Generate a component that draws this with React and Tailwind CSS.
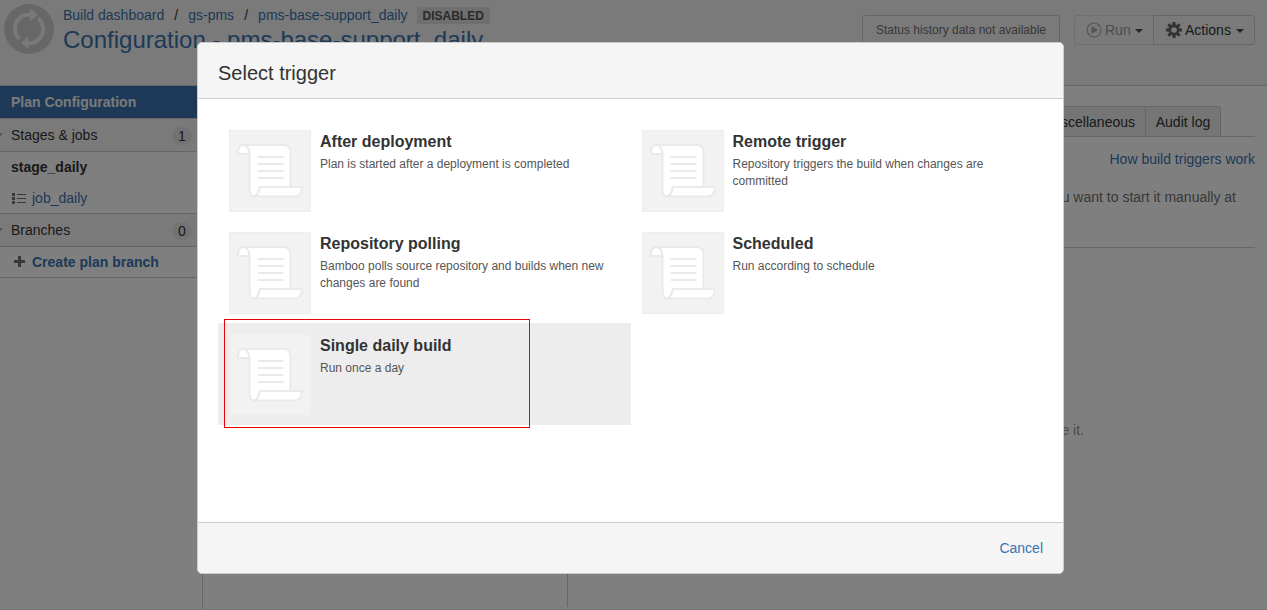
function ScriptIcon() {
  return (
    <svg viewBox="0 0 80 80" className="block size-20" fill="#fff" stroke="#e9ebea" strokeWidth="2" strokeLinejoin="round">
      <path d="M13 14H54Q60.500 14 60.500 22V56H30C28.500 61 27.500 65.500 24 65.500C20.500 65.500 19.500 61 19.500 57V23H8C8 17.500 9.500 14 13 14Z" />
      <path d="M8 23H19.500C19 18 17.500 14 13 14C9.500 14 8 17.500 8 23Z" />
      <path d="M30 56H72C71.500 61 69.500 65.500 65.500 65.500H24C27.500 65.500 29 61 30 56Z" />
      <path d="M27.500 26H53.500M27.500 33H53.500M27.500 40H53.500M27.500 47H53.500" />
    </svg>
  );
}

function PlanAvatar() {
  return (
    <svg viewBox="0 0 50 50" className="size-[50px] shrink-0">
      <circle cx="25" cy="25" r="25" fill="#cfcfcf" />
      <g fill="none" stroke="#f3f3f3" strokeWidth="4">
        <path d="M15.500 35.500A14.200 14.200 0 0 1 26.500 10.800" />
        <path d="M34.500 14.500A14.200 14.200 0 0 1 23.500 39.200" />
      </g>
      <path d="M26 4.500L33.500 11L26 17.500Z" fill="#f3f3f3" />
      <path d="M24.500 45L17 39L24.500 32.500Z" fill="#f3f3f3" />
    </svg>
  );
}

function Gear() {
  return (
    <svg viewBox="0 0 16 16" className="size-4 shrink-0">
      <g stroke="#666" strokeWidth="3">
        <path d="M8 0V16M0 8H16M2.300 2.300L13.700 13.700M13.700 2.300L2.300 13.700" />
      </g>
      <circle cx="8" cy="8" r="5.700" fill="#666" />
      <circle cx="8" cy="8" r="2.800" fill="#f5f5f5" />
    </svg>
  );
}

function Caret() {
  return (
    <svg viewBox="0 0 8 4" className="mt-px h-1 w-2 shrink-0">
      <path d="M0 0H8L4 4Z" fill="#4a4a4a" />
    </svg>
  );
}

function SidebarSection({ label, count }) {
  return (
    <div className="flex h-[33px] items-center border-b border-[#ccc] bg-[#f5f5f5] pr-[10px]">
      <svg viewBox="0 0 3 4" className="h-1 w-[3px]">
        <path d="M0 0H3L0 3.500Z" fill="#aaa" />
      </svg>
      <span className="ml-2 flex-1">{label}</span>
      <span className="mt-[2px] h-[18px] w-5 rounded-full bg-[#e6e6e6] text-center leading-[18px]">{count}</span>
    </div>
  );
}

const triggers = [
  { title: "After deployment", text: "Plan is started after a deployment is completed" },
  { title: "Remote trigger", text: "Repository triggers the build when changes are committed" },
  { title: "Repository polling", text: "Bamboo polls source repository and builds when new changes are found" },
  { title: "Scheduled", text: "Run according to schedule" },
  { title: "Single daily build", text: "Run once a day", active: true },
];

function Trigger({ title, text, active }) {
  return (
    <li className={active ? "flex h-[102px] bg-[#ededed] pt-[11px] pl-[11px]" : "flex h-[102px] pt-[11px] pl-[11px]"}>
      <div className="size-[82px] shrink-0 border border-[#ededed] bg-[#f2f2f2]">
        <ScriptIcon />
      </div>
      <div className="ml-[9px] w-[290px]">
        <h3 className="text-[16px] leading-[23px] font-bold text-[#333]">{title}</h3>
        <p className="mt-[3px] text-[12px] leading-[17px] text-[#555]">{text}</p>
      </div>
    </li>
  );
}

function Page() {
  return (
    <div className="flex h-[610px] flex-col">
      <header className="flex h-[86px] shrink-0 items-start border-b border-[#ccc] bg-[#f5f5f5] pr-3 pl-1">
        <div className="mt-1">
          <PlanAvatar />
        </div>
        <div className="mt-[5px] ml-[9px] flex-1 whitespace-nowrap text-[#3b73af]">
          <div className="flex h-5 items-center">
            <span>Build dashboard</span>
            <span className="w-6 text-center text-[#333]">/</span>
            <span>gs-pms</span>
            <span className="w-6 text-center text-[#333]">/</span>
            <span>pms-base-support_daily</span>
            <span className="ml-[9px] h-[17px] rounded-[3px] bg-[#dedede] px-[6px] text-[12px] leading-[18px] font-bold text-[#555]">DISABLED</span>
          </div>
          <h1 className="text-[24px] leading-[30px]">Configuration - pms-base-support_daily</h1>
        </div>
        <div className="mt-[15px] flex items-start">
          <div className="h-[34px] w-[198px] rounded-[3px] border border-[#ccc] text-center text-[12px] leading-[29px] text-[#707070]">Status history data not available</div>
          <div className="ml-[14px] flex h-[30px] w-[79px] items-center rounded-l-[3px] border border-r-0 border-[#dedede] pl-[11px] text-[#999]">
            <svg viewBox="0 0 16 16" className="mr-[3px] size-4">
              <circle cx="8" cy="8" r="7" fill="none" stroke="#aaa" strokeWidth="1.200" />
              <path d="M5.500 4L12 8L5.500 12Z" fill="#aaa" />
            </svg>
            <span className="mr-[4px]">Run</span>
            <Caret />
          </div>
          <div className="flex h-[30px] w-[102px] items-center rounded-r-[3px] border border-[#ccc] pl-3">
            <Gear />
            <span className="mr-[5px] ml-[3px]">Actions</span>
            <Caret />
          </div>
        </div>
      </header>
      <div className="flex min-h-0 flex-1">
        <nav className="w-[203px] shrink-0 border-r border-[#ccc]">
          <div className="h-[33px] border-b border-[#ccc] bg-[#3b73af] pl-[11px] leading-[33px] font-bold text-[#f5f5f5]">Plan Configuration</div>
          <SidebarSection label="Stages & jobs" count="1" />
          <div className="h-[62px] border-b border-[#ccc] pl-[11px]">
            <div className="h-[31px] leading-[31px] font-bold">stage_daily</div>
            <div className="flex h-[30px] items-center text-[#3b73af]">
              <svg viewBox="0 0 15 11" className="mr-[6px] h-[11px] w-[15px]">
                <path d="M1 0H4V3H1ZM1 4H4V7H1ZM1 8H4V11H1ZM6 1H15V2H6ZM6 5H15V6H6ZM6 9H15V10H6Z" fill="#707070" />
              </svg>
              <span>job_daily</span>
            </div>
          </div>
          <SidebarSection label="Branches" count="0" />
          <div className="flex h-[31px] items-center border-b border-[#ccc] pl-[14px] font-bold text-[#3b73af]">
            <svg viewBox="0 0 11 11" className="mr-[7px] mb-px size-[11px]">
              <path d="M4 0H7V4H11V7H7V11H4V7H0V4H4Z" fill="#707070" />
            </svg>
            <span>Create plan branch</span>
          </div>
        </nav>
        <div className="mb-[2px] w-[365px] shrink-0 border-r border-[#ccc]" />
        <main className="flex flex-1 flex-col pt-5 pr-3">
          <div className="flex h-[31px] shrink-0 justify-end border-b border-[#ccc] pr-[34px]">
            <div className="w-28 border-t border-[#ccc] bg-[#ebebeb] pr-[10px] text-right leading-[31px]">Miscellaneous</div>
            <div className="w-[76px] rounded-tr-[3px] border border-b-0 border-[#ccc] bg-[#ebebeb] text-center leading-[31px]">Audit log</div>
          </div>
          <div className="mt-[12px] text-right leading-5 text-[#3b73af]">How build triggers work</div>
          <div className="mt-[18px] h-[61px] shrink-0 border-b border-[#ccc] pr-[19px] text-right leading-5 text-[#707070]">if you want to start it manually at</div>
          <div className="mt-[172px] pr-[171px] text-right leading-5 text-[#999]">configure it.</div>
        </main>
      </div>
      <div className="h-px shrink-0 bg-[#f0eaf0]" />
    </div>
  );
}

function Dialog() {
  return (
    <section className="absolute top-[42px] left-[197px] flex h-[532px] w-[867px] flex-col overflow-hidden rounded-[5px] border border-[#ccc] bg-white">
      <header className="h-14 border-b border-[#ccc] bg-[#f5f5f5] pl-5">
        <h2 className="text-[20px] leading-[60px] text-[#333]">Select trigger</h2>
      </header>
      <ul className="grid flex-1 grid-cols-2 content-start px-5 pt-5">
        {triggers.map((t) => (
          <Trigger key={t.title} {...t} />
        ))}
      </ul>
      <footer className="flex h-[51px] items-center justify-end border-t border-[#ccc] bg-[#f5f5f5] pr-5 text-[#3b73af]">Cancel</footer>
    </section>
  );
}

export default function App() {
  return (
    <div className="relative h-[610px] w-[1267px] overflow-hidden bg-white font-['Liberation_Sans',Arial,sans-serif] text-[14px] text-[#333]">
      <Page />
      <div className="absolute inset-0 bg-black/50" />
      <Dialog />
      <div className="absolute top-[319px] left-[224px] h-[109px] w-[306px] border border-[#f00000]" />
    </div>
  );
}
